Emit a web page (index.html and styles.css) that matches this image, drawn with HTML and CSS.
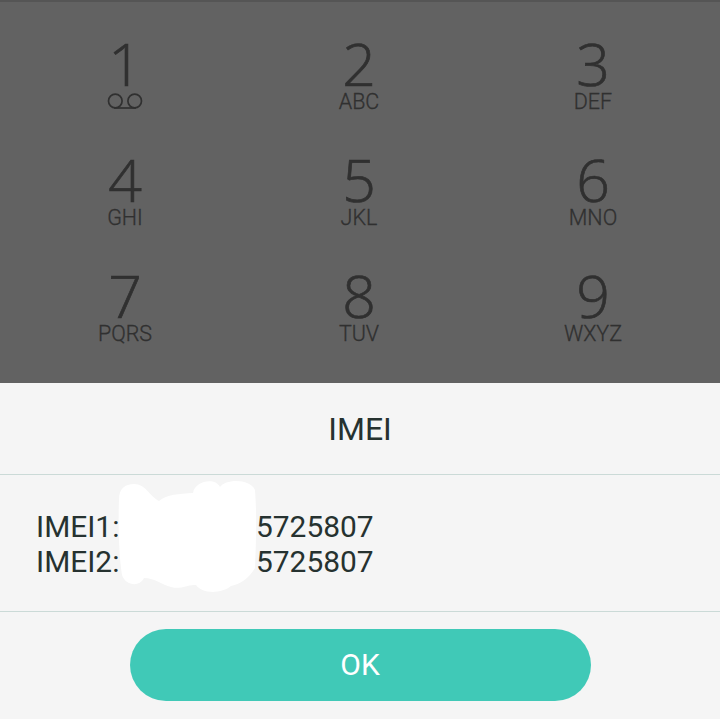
FILE: index.html
```html
<!DOCTYPE html>
<html lang="en">
<head>
<meta charset="utf-8">
<meta name="viewport" content="width=device-width, initial-scale=1">
<title>IMEI</title>
<link rel="stylesheet" href="styles.css">
</head>
<body>
<main class="screen">
  <section class="keypad">
    <div class="key"><span class="digit">1</span>
      <svg class="voicemail" viewBox="0 0 36 17" aria-label="Voicemail"><circle cx="8.3" cy="8" r="6.8"/><circle cx="27.7" cy="8" r="6.8"/><path d="M7 15H29"/></svg>
    </div>
    <div class="key"><span class="digit">2</span><span class="letters">ABC</span></div>
    <div class="key"><span class="digit">3</span><span class="letters">DEF</span></div>
    <div class="key"><span class="digit">4</span><span class="letters">GHI</span></div>
    <div class="key"><span class="digit">5</span><span class="letters">JKL</span></div>
    <div class="key"><span class="digit">6</span><span class="letters">MNO</span></div>
    <div class="key"><span class="digit">7</span><span class="letters">PQRS</span></div>
    <div class="key"><span class="digit">8</span><span class="letters">TUV</span></div>
    <div class="key"><span class="digit">9</span><span class="letters">WXYZ</span></div>
  </section>
  <section class="dialog">
    <h1 class="title">IMEI</h1>
    <div class="content">
      <div class="row"><span class="label">IMEI1:</span><span>5725807</span></div>
      <div class="row"><span class="label">IMEI2:</span><span>5725807</span></div>
      <svg class="redaction" viewBox="0 0 142 116" aria-hidden="true"><path d="M2 22C2 12 8 7 17 7C29 7 32 19 42 24C50 17 62 17 76 16C78 4 98 0 103 10C108 2 133 1 138 13C140 40 139 65 138 91C132 101 124 107 114 109C106 116 86 118 79 108C70 107 65 113 54 110C45 108 38 101 27 101C22 111 8 108 5 98C2 78 1 50 2 22Z"/></svg>
    </div>
    <div class="actions"><button class="ok">OK</button></div>
  </section>
</main>
</body>
</html>
```
FILE: styles.css
```css
* { box-sizing: border-box; }
body { margin: 0; background: #f5f5f5; font-family: Roboto, "Liberation Sans", sans-serif; }
.screen { width: 720px; height: 719px; overflow: hidden; display: flex; flex-direction: column; }
.keypad {
  height: 383px;
  padding: 32px 10px 0 8px;
  background: #626262;
  border-top: 2px solid #555;
  display: grid;
  grid-template-columns: repeat(3, 1fr);
  grid-auto-rows: 116px;
  color: #303030;
}
.key { display: flex; flex-direction: column; align-items: center; }
.digit { font-family: "Open Sans", sans-serif; font-size: 59px; line-height: 58px; font-weight: 300; -webkit-text-stroke: 0.7px #303030; }
.letters { margin-top: 1px; font-size: 21.5px; line-height: 18px; font-weight: 300; -webkit-text-stroke: 0.3px #303030; }
.voicemail { width: 36px; height: 17px; margin-top: 1px; fill: none; stroke: #303030; stroke-width: 1.7; }
.dialog { flex: 1; background: #f5f5f5; color: #263230; }
.title { margin: 0; height: 92px; line-height: 92px; font-size: 32px; font-weight: 400; text-align: center; border-bottom: 1px solid #cbdad7; }
.content { position: relative; height: 137px; padding: 34px 36px 0; border-bottom: 1px solid #cbdad7; font-size: 29.9px; line-height: 35px; }
.row { display: flex; }
.label { width: 220px; }
.redaction { position: absolute; left: 117px; top: 2px; width: 142px; height: 116px; fill: #fff; z-index: 0; }
.row span { position: relative; z-index: 1; }
.actions { display: flex; justify-content: center; padding-top: 17px; }
.ok { width: 461px; height: 72px; padding: 0; border: 0; border-radius: 36px; background: #40c9b7; color: #fff; font: 400 30px/72px Roboto, sans-serif; }
```
